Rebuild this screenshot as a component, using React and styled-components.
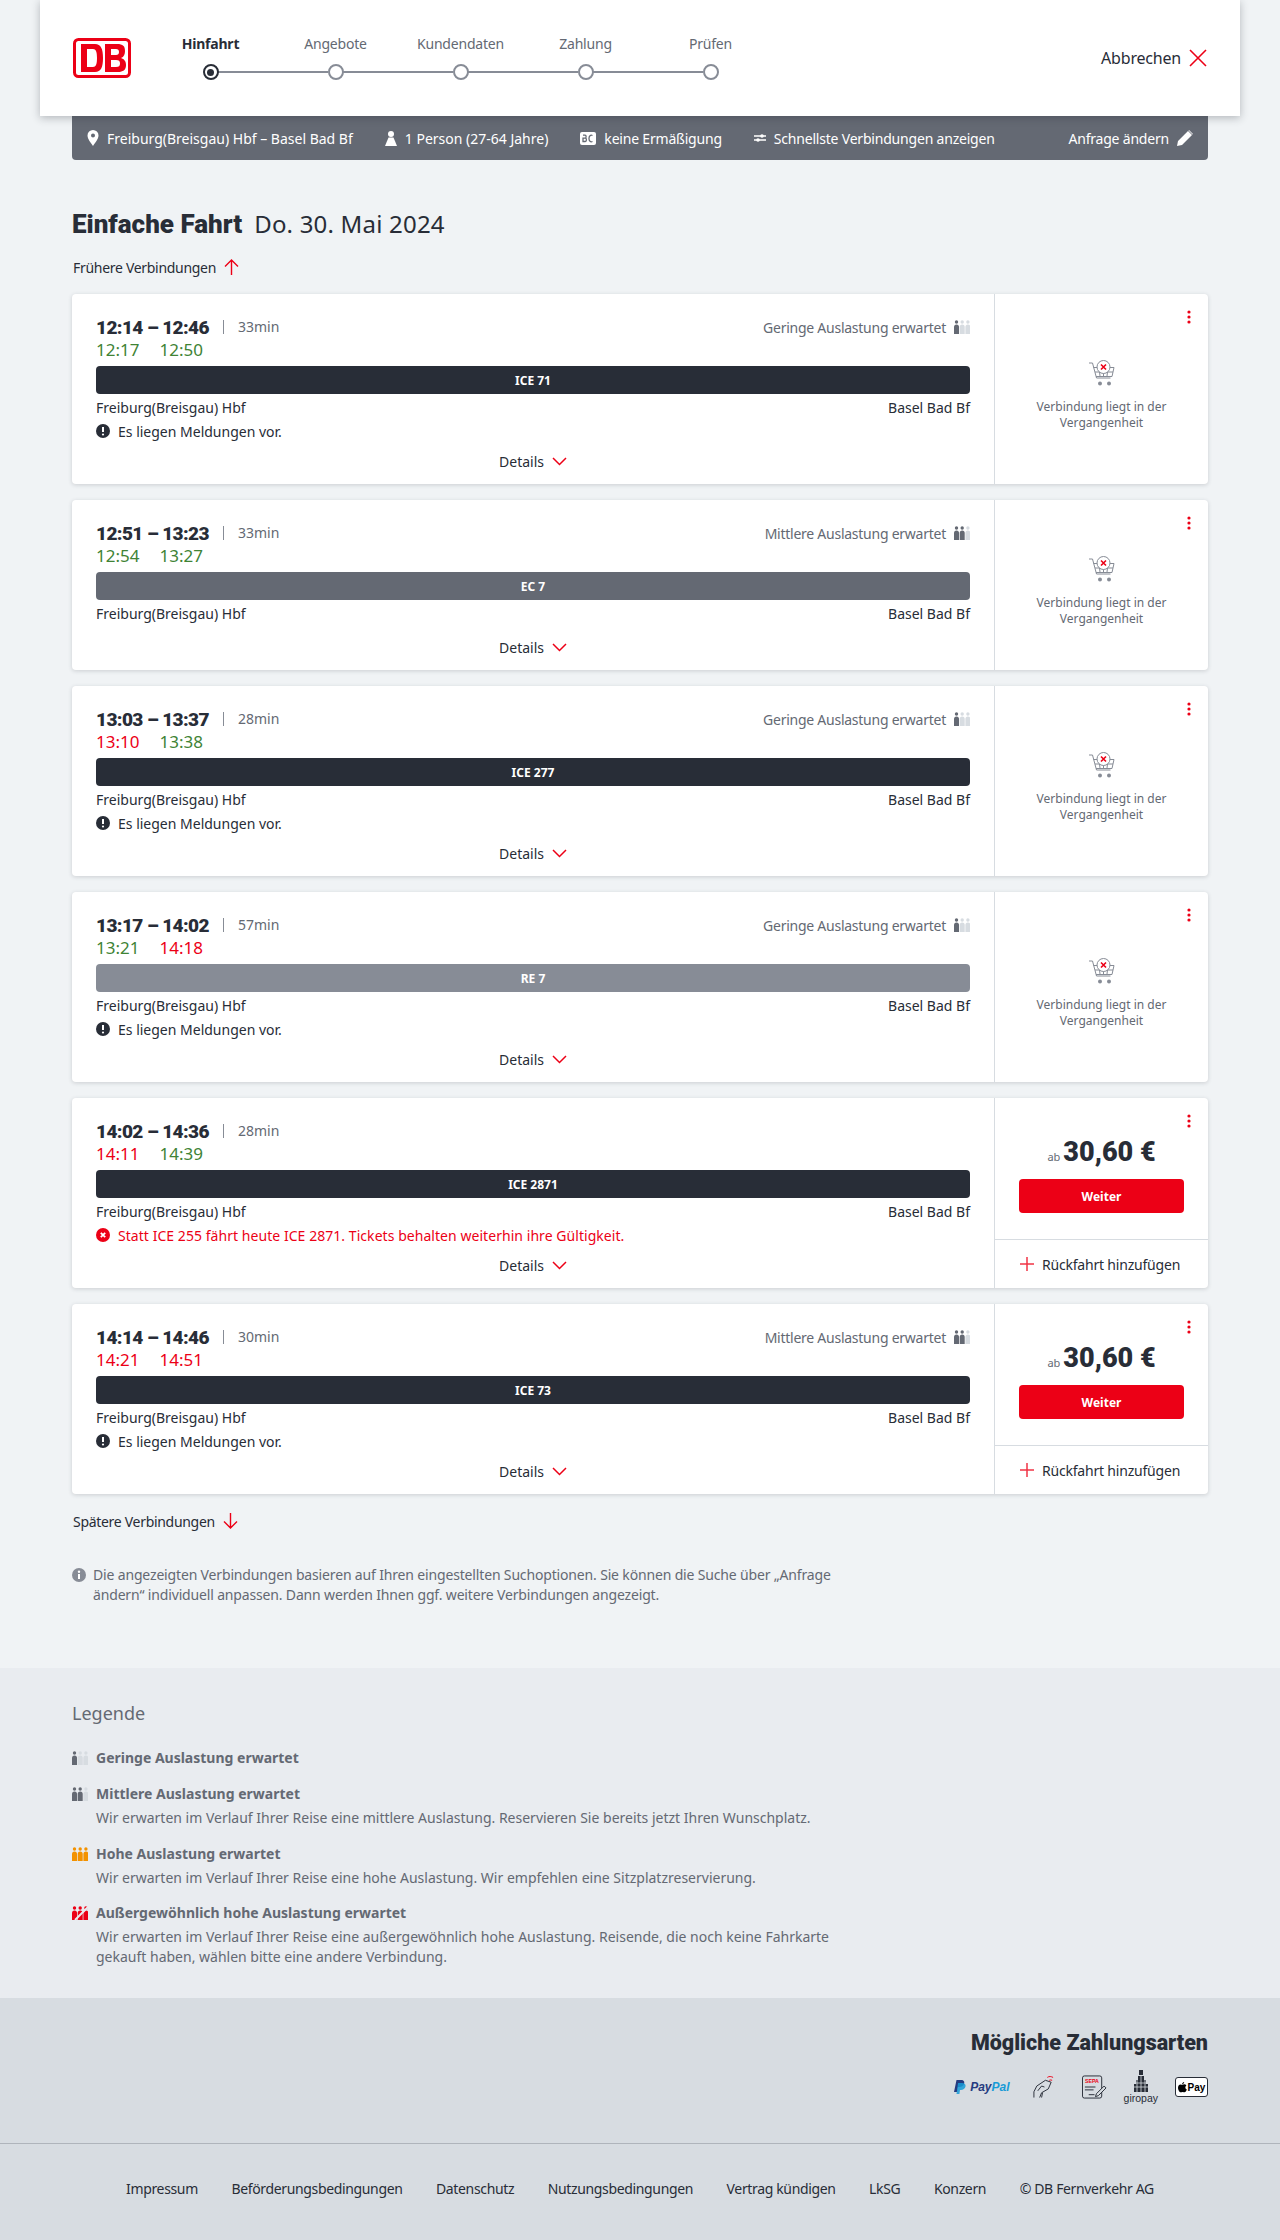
import React from 'react'
import styled, { createGlobalStyle } from 'styled-components'

const GlobalStyle = createGlobalStyle`
  html, body {
    margin: 0;
    padding: 0;
    background: #f0f3f5;
    color: #282d37;
    font-family: "Noto Sans", "Liberation Sans", sans-serif;
    font-size: 14px;
  }
  * {
    box-sizing: border-box;
  }
`

const RED = '#ec0016'
const HEAVY = '"Roboto", "Noto Sans", sans-serif'

const Page = styled.div`
  width: 1280px;
  height: 2240px;
  display: flex;
  flex-direction: column;
`

const Header = styled.header`
  position: relative;
  z-index: 2;
  align-items: center;
  background: #fff;
  box-shadow: 0 2px 8px rgba(40, 45, 55, 0.3);
  display: flex;
  flex: none;
  height: 116px;
  margin: 0 40px;
  padding: 0 33px;
`

const Stepper = styled.ol`
  display: flex;
  list-style: none;
  margin: 0 0 2px 17px;
  padding: 0;
`

const Step = styled.li`
  position: relative;
  align-items: center;
  color: ${p => (p.$active ? '#282d37' : '#646973')};
  display: flex;
  flex-direction: column;
  font-weight: ${p => (p.$active ? 700 : 400)};
  gap: 10px;
  height: 46px;
  width: 125px;

  &:not(:last-child)::after {
    content: '';
    position: absolute;
    background: #878c96;
    height: 2px;
    left: 70px;
    top: 37px;
    width: 110px;
  }
`

const StepLabel = styled.span`
  font-size: 14px;
  letter-spacing: -0.2px;
  line-height: 20px;
  white-space: nowrap;
`

const StepDot = styled.span`
  position: relative;
  z-index: 1;
  align-items: center;
  background: #fff;
  border: 2px solid ${p => (p.$active ? '#282d37' : '#878c96')};
  border-radius: 50%;
  display: flex;
  height: 16px;
  justify-content: center;
  width: 16px;

  &::before {
    content: '';
    background: #282d37;
    border-radius: 50%;
    display: ${p => (p.$active ? 'block' : 'none')};
    height: 7px;
    width: 7px;
  }
`

const Cancel = styled.div`
  align-items: center;
  display: flex;
  font-size: 16px;
  gap: 8px;
  letter-spacing: -0.2px;
  margin-left: auto;
`

const Main = styled.main`
  flex: none;
  padding: 0 72px 63px;
`

const QueryBar = styled.div`
  align-items: center;
  background: #646973;
  border-radius: 0 0 4px 4px;
  color: #fff;
  display: flex;
  gap: 32px;
  height: 44px;
  padding: 0 15px;
`

const QueryItem = styled.span`
  align-items: center;
  display: flex;
  gap: 8px;
  white-space: nowrap;
  ${p => p.$tight && 'letter-spacing: -0.2px;'}
  ${p => p.$end && 'margin-left: auto;'}
`

const Title = styled.h1`
  font-family: ${HEAVY};
  font-size: 26px;
  font-weight: 900;
  line-height: 32px;
  margin: 48px 0 0;
`

const TitleDate = styled.span`
  font-family: "Noto Sans", sans-serif;
  font-size: 24px;
  font-weight: 400;
  letter-spacing: 0.2px;
  margin-left: 12px;
`

const PageLink = styled.div`
  align-items: center;
  display: flex;
  gap: 8px;
  height: 22px;
  letter-spacing: -0.3px;
  margin: ${p => p.$margin};
  padding-left: 1px;
`

const CardList = styled.div`
  display: flex;
  flex-direction: column;
  gap: 16px;
`

const Card = styled.article`
  background: #fff;
  border-radius: 4px;
  box-shadow: 0 1px 4px rgba(40, 45, 55, 0.18);
  display: flex;
  height: ${p => (p.$short ? 170 : 190)}px;
`

const Journey = styled.div`
  display: flex;
  flex: 1;
  flex-direction: column;
  padding: 22px 24px 12px;
`

const Row = styled.div`
  align-items: center;
  display: flex;
  justify-content: space-between;
`

const TimeRow = styled(Row)`
  height: 22px;
`

const Planned = styled.div`
  align-items: center;
  display: flex;
`

const Times = styled.span`
  font-family: ${HEAVY};
  font-size: 19px;
  font-weight: 900;
  letter-spacing: -0.6px;
`

const Duration = styled.span`
  border-left: 1px solid #878c96;
  color: #646973;
  line-height: 14px;
  margin-left: 14px;
  padding-left: 14px;
`

const Load = styled.span`
  align-items: center;
  color: #646973;
  display: flex;
  gap: 8px;
  letter-spacing: -0.25px;
`

const RealTimes = styled.div`
  display: flex;
  font-size: 17px;
  gap: 20px;
  height: 24px;
  line-height: 24px;
`

const RealTime = styled.span`
  color: ${p => (p.$late ? RED : '#408335')};
`

const TrainBar = styled.div`
  align-items: center;
  background: ${p => p.$color};
  border-radius: 4px;
  color: #fff;
  display: flex;
  flex: 0 0 28px;
  font-size: 12px;
  font-weight: 700;
  justify-content: center;
  margin-top: 4px;
`

const Stations = styled(Row)`
  height: 20px;
  margin-top: 3px;
`

const Message = styled.div`
  align-items: center;
  color: ${p => (p.$error ? RED : '#282d37')};
  display: flex;
  gap: 8px;
  height: 20px;
  letter-spacing: ${p => (p.$error ? '0.05px' : '0')};
  margin-top: 4px;
`

const DetailsRow = styled.div`
  align-items: center;
  display: flex;
  gap: 8px;
  height: 22px;
  justify-content: center;
  margin-top: auto;
`

const Side = styled.aside`
  position: relative;
  border-left: 1px solid #d7dce1;
  display: flex;
  flex: 0 0 214px;
  flex-direction: column;
`

const Dots = styled.span`
  position: absolute;
  display: flex;
  right: 17px;
  top: 16px;
`

const PastOffer = styled.div`
  align-items: center;
  color: #646973;
  display: flex;
  flex: 1;
  flex-direction: column;
  font-size: 12px;
  gap: 12px;
  justify-content: center;
  line-height: 16px;
  padding-top: 12px;
  text-align: center;
`

const Offer = styled.div`
  align-items: center;
  display: flex;
  flex: 1;
  flex-direction: column;
  padding-top: 37px;
`

const Price = styled.div`
  align-items: baseline;
  display: flex;
  font-family: ${HEAVY};
  font-size: 27px;
  font-weight: 900;
  gap: 3px;
  height: 34px;
  line-height: 34px;
`

const PriceFrom = styled.small`
  color: #646973;
  font-family: "Noto Sans", sans-serif;
  font-size: 11px;
  font-weight: 400;
`

const NextButton = styled.button`
  background: ${RED};
  border: none;
  border-radius: 4px;
  color: #fff;
  font-family: inherit;
  font-size: 12px;
  font-weight: 700;
  height: 34px;
  margin-top: 10px;
  width: 165px;
`

const ReturnRow = styled.div`
  align-items: center;
  border-top: 1px solid #d7dce1;
  display: flex;
  flex: 0 0 49px;
  gap: 8px;
  letter-spacing: -0.2px;
  padding-left: 25px;
`

const Note = styled.p`
  color: #646973;
  display: flex;
  gap: 7px;
  letter-spacing: -0.16px;
  line-height: 20px;
  margin: 33px 0 0;
`

const Legend = styled.section`
  background: #e9ecf0;
  color: #646973;
  flex: none;
  height: 330px;
  padding: 33px 72px 0;
`

const LegendTitle = styled.h2`
  font-size: 18px;
  font-weight: 400;
  line-height: 24px;
  margin: 0 0 23px;
`

const LegendRow = styled.div`
  display: grid;
  grid-template-columns: 16px 1fr;
  column-gap: 8px;
  line-height: 20px;
  margin-bottom: ${p => p.$gap}px;
  align-items: center;
`

const LegendName = styled.strong`
  font-weight: 700;
`

const LegendText = styled.span`
  grid-column: 2;
  margin-top: 4px;
`

const Payment = styled.section`
  align-items: flex-end;
  background: #d7dce1;
  border-bottom: 1px solid #afb4bb;
  display: flex;
  flex: none;
  flex-direction: column;
  height: 146px;
  padding: 31px 72px 0;
`

const PaymentTitle = styled.h2`
  font-family: ${HEAVY};
  font-size: 21.500px;
  font-weight: 900;
  line-height: 28px;
  margin: 0;
`

const PaymentIcons = styled.div`
  align-items: center;
  display: flex;
  gap: 17px;
  height: 36px;
  margin-top: 12px;
`

const PayPalWord = styled.span`
  color: #253b80;
  font-family: "Liberation Sans", sans-serif;
  font-size: 12px;
  font-style: italic;
  font-weight: 700;

  b {
    color: #179bd7;
  }
`

const PayPalMark = styled.span`
  align-items: center;
  display: flex;
  gap: 4px;
  margin-right: 5px;
`

const ContactlessMark = styled.span`
  display: flex;
  margin-right: 10px;
`

const Giropay = styled.span`
  align-items: center;
  display: flex;
  flex-direction: column;
  font-family: "Liberation Sans", sans-serif;
  font-size: 10.500px;
  line-height: 12px;
`

const ApplePay = styled.span`
  align-items: center;
  background: #fff;
  border: 1px solid #282d37;
  border-radius: 3px;
  color: #000;
  display: flex;
  font-family: "Liberation Sans", sans-serif;
  font-size: 10px;
  font-weight: 700;
  gap: 1px;
  height: 20px;
  justify-content: center;
  width: 33px;
`

const FooterLinks = styled.footer`
  background: #d7dce1;
  color: #282d37;
  display: flex;
  flex: 1;
  gap: 33.500px;
  justify-content: center;
  letter-spacing: -0.35px;
  padding-top: 35px;
  white-space: nowrap;
`

const DbLogo = () => (
  <svg width="58" height="40" viewBox="0 0 58 40">
    <rect x="1.500" y="1.500" width="55" height="37" rx="4" fill="#fff" stroke={RED} strokeWidth="3" />
    <path fill={RED} fillRule="evenodd" d="M8 6h14c6 0 8 5 8 14s-2 14-8 14H8zm6 5v18h6c3 0 4-3 4-9s-1-9-4-9z" />
    <path fill={RED} fillRule="evenodd" d="M32 6h12c6 0 8 2 8 7 0 3-1 6-4 7 3 1 5 3 5 7 0 5-3 7-8 7H32zm6 5v6h5c2 0 3-1 3-3s-1-3-3-3zm0 11v7h5c3 0 4-1 4-3.500s-1-3.500-4-3.500z" />
  </svg>
)

const CloseIcon = () => (
  <svg width="18" height="18" viewBox="0 0 18 18">
    <path d="M1 1l16 16M17 1L1 17" stroke={RED} strokeWidth="1.600" fill="none" />
  </svg>
)

const PinIcon = () => (
  <svg width="12" height="16" viewBox="0 0 12 16">
    <path fill="#fff" fillRule="evenodd" d="M6 0a5.500 5.500 0 0 1 5.500 5.500C11.500 9 8 13 6 16 4 13 .5 9 .5 5.500A5.500 5.500 0 0 1 6 0zm0 3.500a2 2 0 1 0 0 4 2 2 0 0 0 0-4z" />
  </svg>
)

const PersonIcon = () => (
  <svg width="12" height="15" viewBox="0 0 12 15">
    <circle cx="6" cy="3" r="3" fill="#fff" />
    <path fill="#fff" d="M3.500 6.500h5L12 15H0z" />
  </svg>
)

const CardBadge = () => (
  <svg width="16" height="13" viewBox="0 0 16 13">
    <rect width="16" height="13" rx="2" fill="#fff" />
    <path fill="none" stroke="#646973" strokeWidth="1.300" d="M3 3.200h2c1.500 0 1.500 3 0 3H3m0 0h2.300c1.500 0 1.500 3.300 0 3.300H3zM12.500 3.500C10.500 2.500 9 4 9 6.500S10.500 10.500 12.500 9.500" />
  </svg>
)

const SwapIcon = () => (
  <svg width="12" height="10" viewBox="0 0 12 10">
    <path fill="none" stroke="#fff" strokeWidth="1.500" d="M0 3h12M0 7h12" />
    <circle cx="8" cy="3" r="1.800" fill="#fff" />
    <circle cx="4" cy="7" r="1.800" fill="#fff" />
  </svg>
)

const PencilIcon = () => (
  <svg width="16" height="16" viewBox="0 0 16 16">
    <path fill="#fff" d="M0 16l1-5L11 1l4 4L5 15zM12 0l4 4-.5.500-4-4z" />
  </svg>
)

const ArrowIcon = ({ down }) => (
  <svg width="15" height="16" viewBox="0 0 15 16" style={down ? { transform: 'rotate(180deg)' } : undefined}>
    <path d="M7.500 16V1M1 7.500L7.500 1 14 7.500" stroke={RED} strokeWidth="1.400" fill="none" />
  </svg>
)

const ChevronIcon = () => (
  <svg width="15" height="9" viewBox="0 0 15 9">
    <path d="M1 1l6.500 6.500L14 1" stroke={RED} strokeWidth="1.500" fill="none" />
  </svg>
)

const PlusIcon = () => (
  <svg width="14" height="14" viewBox="0 0 14 14">
    <path d="M7 0v14M0 7h14" stroke="#ec0016" strokeOpacity="0.8" strokeWidth="1.500" />
  </svg>
)

const KebabIcon = () => (
  <svg width="4" height="14" viewBox="0 0 4 14">
    <circle cx="2" cy="2" r="1.600" fill={RED} />
    <circle cx="2" cy="7" r="1.600" fill={RED} />
    <circle cx="2" cy="12" r="1.600" fill={RED} />
  </svg>
)

const AlertIcon = () => (
  <svg width="14" height="14" viewBox="0 0 14 14">
    <circle cx="7" cy="7" r="7" fill="#282d37" />
    <path d="M7 3v5" stroke="#fff" strokeWidth="2" />
    <circle cx="7" cy="10.500" r="1.100" fill="#fff" />
  </svg>
)

const ErrorIcon = () => (
  <svg width="14" height="14" viewBox="0 0 14 14">
    <circle cx="7" cy="7" r="7" fill={RED} />
    <path d="M4.800 4.800l4.400 4.400M9.200 4.800L4.800 9.200" stroke="#fff" strokeWidth="1.800" />
  </svg>
)

const InfoIcon = () => (
  <svg width="14" height="14" viewBox="0 0 14 14" style={{ flex: 'none', marginTop: 3 }}>
    <circle cx="7" cy="7" r="7" fill="#878c96" />
    <circle cx="7" cy="3.800" r="1.200" fill="#fff" />
    <path d="M7 6v5" stroke="#fff" strokeWidth="2" />
  </svg>
)

const CartIcon = () => (
  <svg width="28" height="28" viewBox="0 0 28 28">
    <g fill="none" stroke="#878c96" strokeWidth="1">
      <path d="M1 4h3.500l4 15h14M5.500 8.500H26l-2 9H8M7 13h18M11 9l1 8M20 9l-1 8M15.500 13v4" />
      <circle cx="15.500" cy="8" r="6.500" fill="#fff" />
    </g>
    <path d="M13 5.500l5 5M18 5.500l-5 5" stroke={RED} strokeWidth="1.600" />
    <circle cx="12" cy="24.500" r="2" fill="#878c96" />
    <circle cx="21" cy="24.500" r="2" fill="#878c96" />
  </svg>
)

// one little person per seat group, the first `level` ones are filled
const LoadIcon = ({ level, color = '#646973', off = '#d7dce1', slash }) => (
  <svg width="16" height="14" viewBox="0 0 16 14">
    {[0, 1, 2].map(i => (
      <g key={i} fill={i < level ? color : off}>
        <circle cx={2.5 + i * 5.7} cy="2" r="1.700" />
        <path d={`M${i * 5.7} 7a2.500 2.500 0 0 1 5 0v7h-5z`} />
      </g>
    ))}
    {slash && <path d="M3 14L16 1" stroke="#e9ecf0" strokeWidth="2" />}
  </svg>
)

const ContactlessIcon = () => (
  <svg width="23" height="26" viewBox="0 0 24 26">
    <g fill="none" stroke="#282d37" strokeWidth="1">
      <path d="M2 24v-6l3-6 9-6 6 2-3 7-7 4-2 5M6 17l4-5 3 1M10 24l1-5" />
    </g>
    <path d="M16 3c2-1.500 4-1 6 0M18 6c1-.5 2-.5 3 0" fill="none" stroke={RED} strokeWidth="1" />
  </svg>
)

const SepaIcon = () => (
  <svg width="25" height="24" viewBox="0 0 26 24">
    <rect x=".5" y=".5" width="20" height="23" rx="2" fill="none" stroke="#282d37" />
    <text x="3" y="8" fontSize="5.500" fontWeight="700" fill={RED} fontFamily="Liberation Sans, sans-serif">SEPA</text>
    <path d="M3 12h11M3 15h9M7 20h6" stroke="#282d37" fill="none" />
    <path d="M15 19l8-8 2 2-8 8-3 1z" fill="#d7dce1" stroke="#282d37" />
  </svg>
)

const GiroTower = () => (
  <svg width="16" height="22" viewBox="0 0 16 22">
    <path fill="#282d37" d="M6 0h4v5H6zM5 6h6v4H5zM3 10h10v4H3zM1 14h14v8H1z" />
    <path stroke="#d7dce1" strokeWidth=".8" d="M4 9v13M8 6v16M12 9v13M1 13h14M1 17h14" />
  </svg>
)

const AppleGlyph = () => (
  <svg width="9" height="11" viewBox="0 0 9 11">
    <path fill="#000" d="M6.200 0c0 1.200-.9 2.200-2 2.200C4.100 1 5.100.1 6.200 0zM4.400 2.800c.5 0 1.100-.5 2-.5.700 0 1.500.4 2 1.100-1.600 1-1.400 3.200.4 4-.4 1.200-1.400 2.900-2.400 2.900-.7 0-1-.4-1.800-.4s-1.200.4-1.900.4C1.500 10.300 0 7.800 0 5.700c0-2.100 1.300-3.300 2.500-3.300.8 0 1.400.4 1.900.4z" />
  </svg>
)

const PayPalP = () => (
  <svg width="12" height="14" viewBox="0 0 12 14">
    <path fill="#253b80" d="M2.500 0h4.500c3 0 3.800 2 3 4-.7 2-2.500 3-4.500 3H4l-.8 5H0z" />
    <path fill="#179bd7" d="M4 3h4c2.500 0 4 1.200 3.500 3.500S9 10 7 10H6l-.6 4H2.500z" opacity=".85" />
  </svg>
)

const steps = ['Hinfahrt', 'Angebote', 'Kundendaten', 'Zahlung', 'Prüfen']

const connections = [
  { times: '12:14 – 12:46', duration: '33min', load: 1, real: [['12:17'], ['12:50']], train: 'ICE 71', color: '#282d37', message: true },
  { times: '12:51 – 13:23', duration: '33min', load: 2, real: [['12:54'], ['13:27']], train: 'EC 7', color: '#646973' },
  { times: '13:03 – 13:37', duration: '28min', load: 1, real: [['13:10', true], ['13:38']], train: 'ICE 277', color: '#282d37', message: true },
  { times: '13:17 – 14:02', duration: '57min', load: 1, real: [['13:21'], ['14:18', true]], train: 'RE 7', color: '#878c96', message: true },
  { times: '14:02 – 14:36', duration: '28min', real: [['14:11', true], ['14:39']], train: 'ICE 2871', color: '#282d37', error: 'Statt ICE 255 fährt heute ICE 2871. Tickets behalten weiterhin ihre Gültigkeit.', price: true },
  { times: '14:14 – 14:46', duration: '30min', load: 2, real: [['14:21', true], ['14:51', true]], train: 'ICE 73', color: '#282d37', message: true, price: true },
]

const loadNames = { 1: 'Geringe Auslastung erwartet', 2: 'Mittlere Auslastung erwartet' }

const footerLinks = ['Impressum', 'Beförderungsbedingungen', 'Datenschutz', 'Nutzungsbedingungen', 'Vertrag kündigen', 'LkSG', 'Konzern', '© DB Fernverkehr AG']

const ConnectionCard = ({ c }) => (
  <Card $short={!c.message && !c.error}>
    <Journey>
      <TimeRow>
        <Planned>
          <Times>{c.times}</Times>
          <Duration>{c.duration}</Duration>
        </Planned>
        {c.load && (
          <Load>
            {loadNames[c.load]}
            <LoadIcon level={c.load} />
          </Load>
        )}
      </TimeRow>
      <RealTimes>
        {c.real.map(([time, late]) => <RealTime key={time} $late={late}>{time}</RealTime>)}
      </RealTimes>
      <TrainBar $color={c.color}>{c.train}</TrainBar>
      <Stations>
        <span>Freiburg(Breisgau) Hbf</span>
        <span>Basel Bad Bf</span>
      </Stations>
      {c.message && <Message><AlertIcon />Es liegen Meldungen vor.</Message>}
      {c.error && <Message $error><ErrorIcon />{c.error}</Message>}
      <DetailsRow>Details <ChevronIcon /></DetailsRow>
    </Journey>
    <Side>
      <Dots><KebabIcon /></Dots>
      {c.price ? (
        <>
          <Offer>
            <Price><PriceFrom>ab</PriceFrom>30,60 €</Price>
            <NextButton>Weiter</NextButton>
          </Offer>
          <ReturnRow><PlusIcon />Rückfahrt hinzufügen</ReturnRow>
        </>
      ) : (
        <PastOffer>
          <CartIcon />
          <span>Verbindung liegt in der<br />Vergangenheit</span>
        </PastOffer>
      )}
    </Side>
  </Card>
)

const App = () => (
  <Page>
    <GlobalStyle />
    <Header>
      <DbLogo />
      <Stepper>
        {steps.map((step, i) => (
          <Step key={step} $active={i === 0}>
            <StepLabel>{step}</StepLabel>
            <StepDot $active={i === 0} />
          </Step>
        ))}
      </Stepper>
      <Cancel>Abbrechen <CloseIcon /></Cancel>
    </Header>
    <Main>
      <QueryBar>
        <QueryItem><PinIcon />Freiburg(Breisgau) Hbf – Basel Bad Bf</QueryItem>
        <QueryItem><PersonIcon />1 Person (27-64 Jahre)</QueryItem>
        <QueryItem $tight><CardBadge />keine Ermäßigung</QueryItem>
        <QueryItem $tight><SwapIcon />Schnellste Verbindungen anzeigen</QueryItem>
        <QueryItem $tight $end>Anfrage ändern <PencilIcon /></QueryItem>
      </QueryBar>
      <Title>Einfache Fahrt<TitleDate>Do. 30. Mai 2024</TitleDate></Title>
      <PageLink $margin="16px 0 16px">Frühere Verbindungen <ArrowIcon /></PageLink>
      <CardList>
        {connections.map(c => <ConnectionCard key={c.train} c={c} />)}
      </CardList>
      <PageLink $margin="16px 0 0">Spätere Verbindungen <ArrowIcon down /></PageLink>
      <Note>
        <InfoIcon />
        <span>
          Die angezeigten Verbindungen basieren auf Ihren eingestellten Suchoptionen. Sie können die Suche über „Anfrage<br />
          ändern“ individuell anpassen. Dann werden Ihnen ggf. weitere Verbindungen angezeigt.
        </span>
      </Note>
    </Main>
    <Legend>
      <LegendTitle>Legende</LegendTitle>
      <LegendRow $gap={16}>
        <LoadIcon level={1} off="#d7dce1" />
        <LegendName>Geringe Auslastung erwartet</LegendName>
      </LegendRow>
      <LegendRow $gap={16}>
        <LoadIcon level={2} />
        <LegendName>Mittlere Auslastung erwartet</LegendName>
        <LegendText>Wir erwarten im Verlauf Ihrer Reise eine mittlere Auslastung. Reservieren Sie bereits jetzt Ihren Wunschplatz.</LegendText>
      </LegendRow>
      <LegendRow $gap={15}>
        <LoadIcon level={3} color="#f39200" />
        <LegendName>Hohe Auslastung erwartet</LegendName>
        <LegendText>Wir erwarten im Verlauf Ihrer Reise eine hohe Auslastung. Wir empfehlen eine Sitzplatzreservierung.</LegendText>
      </LegendRow>
      <LegendRow $gap={0}>
        <LoadIcon level={3} color={RED} slash />
        <LegendName>Außergewöhnlich hohe Auslastung erwartet</LegendName>
        <LegendText>
          Wir erwarten im Verlauf Ihrer Reise eine außergewöhnlich hohe Auslastung. Reisende, die noch keine Fahrkarte<br />
          gekauft haben, wählen bitte eine andere Verbindung.
        </LegendText>
      </LegendRow>
    </Legend>
    <Payment>
      <PaymentTitle>Mögliche Zahlungsarten</PaymentTitle>
      <PaymentIcons>
        <PayPalMark><PayPalP /><PayPalWord>Pay<b>Pal</b></PayPalWord></PayPalMark>
        <ContactlessMark><ContactlessIcon /></ContactlessMark>
        <SepaIcon />
        <Giropay><GiroTower />giropay</Giropay>
        <ApplePay><AppleGlyph />Pay</ApplePay>
      </PaymentIcons>
    </Payment>
    <FooterLinks>
      {footerLinks.map(link => <span key={link}>{link}</span>)}
    </FooterLinks>
  </Page>
)

export default App
